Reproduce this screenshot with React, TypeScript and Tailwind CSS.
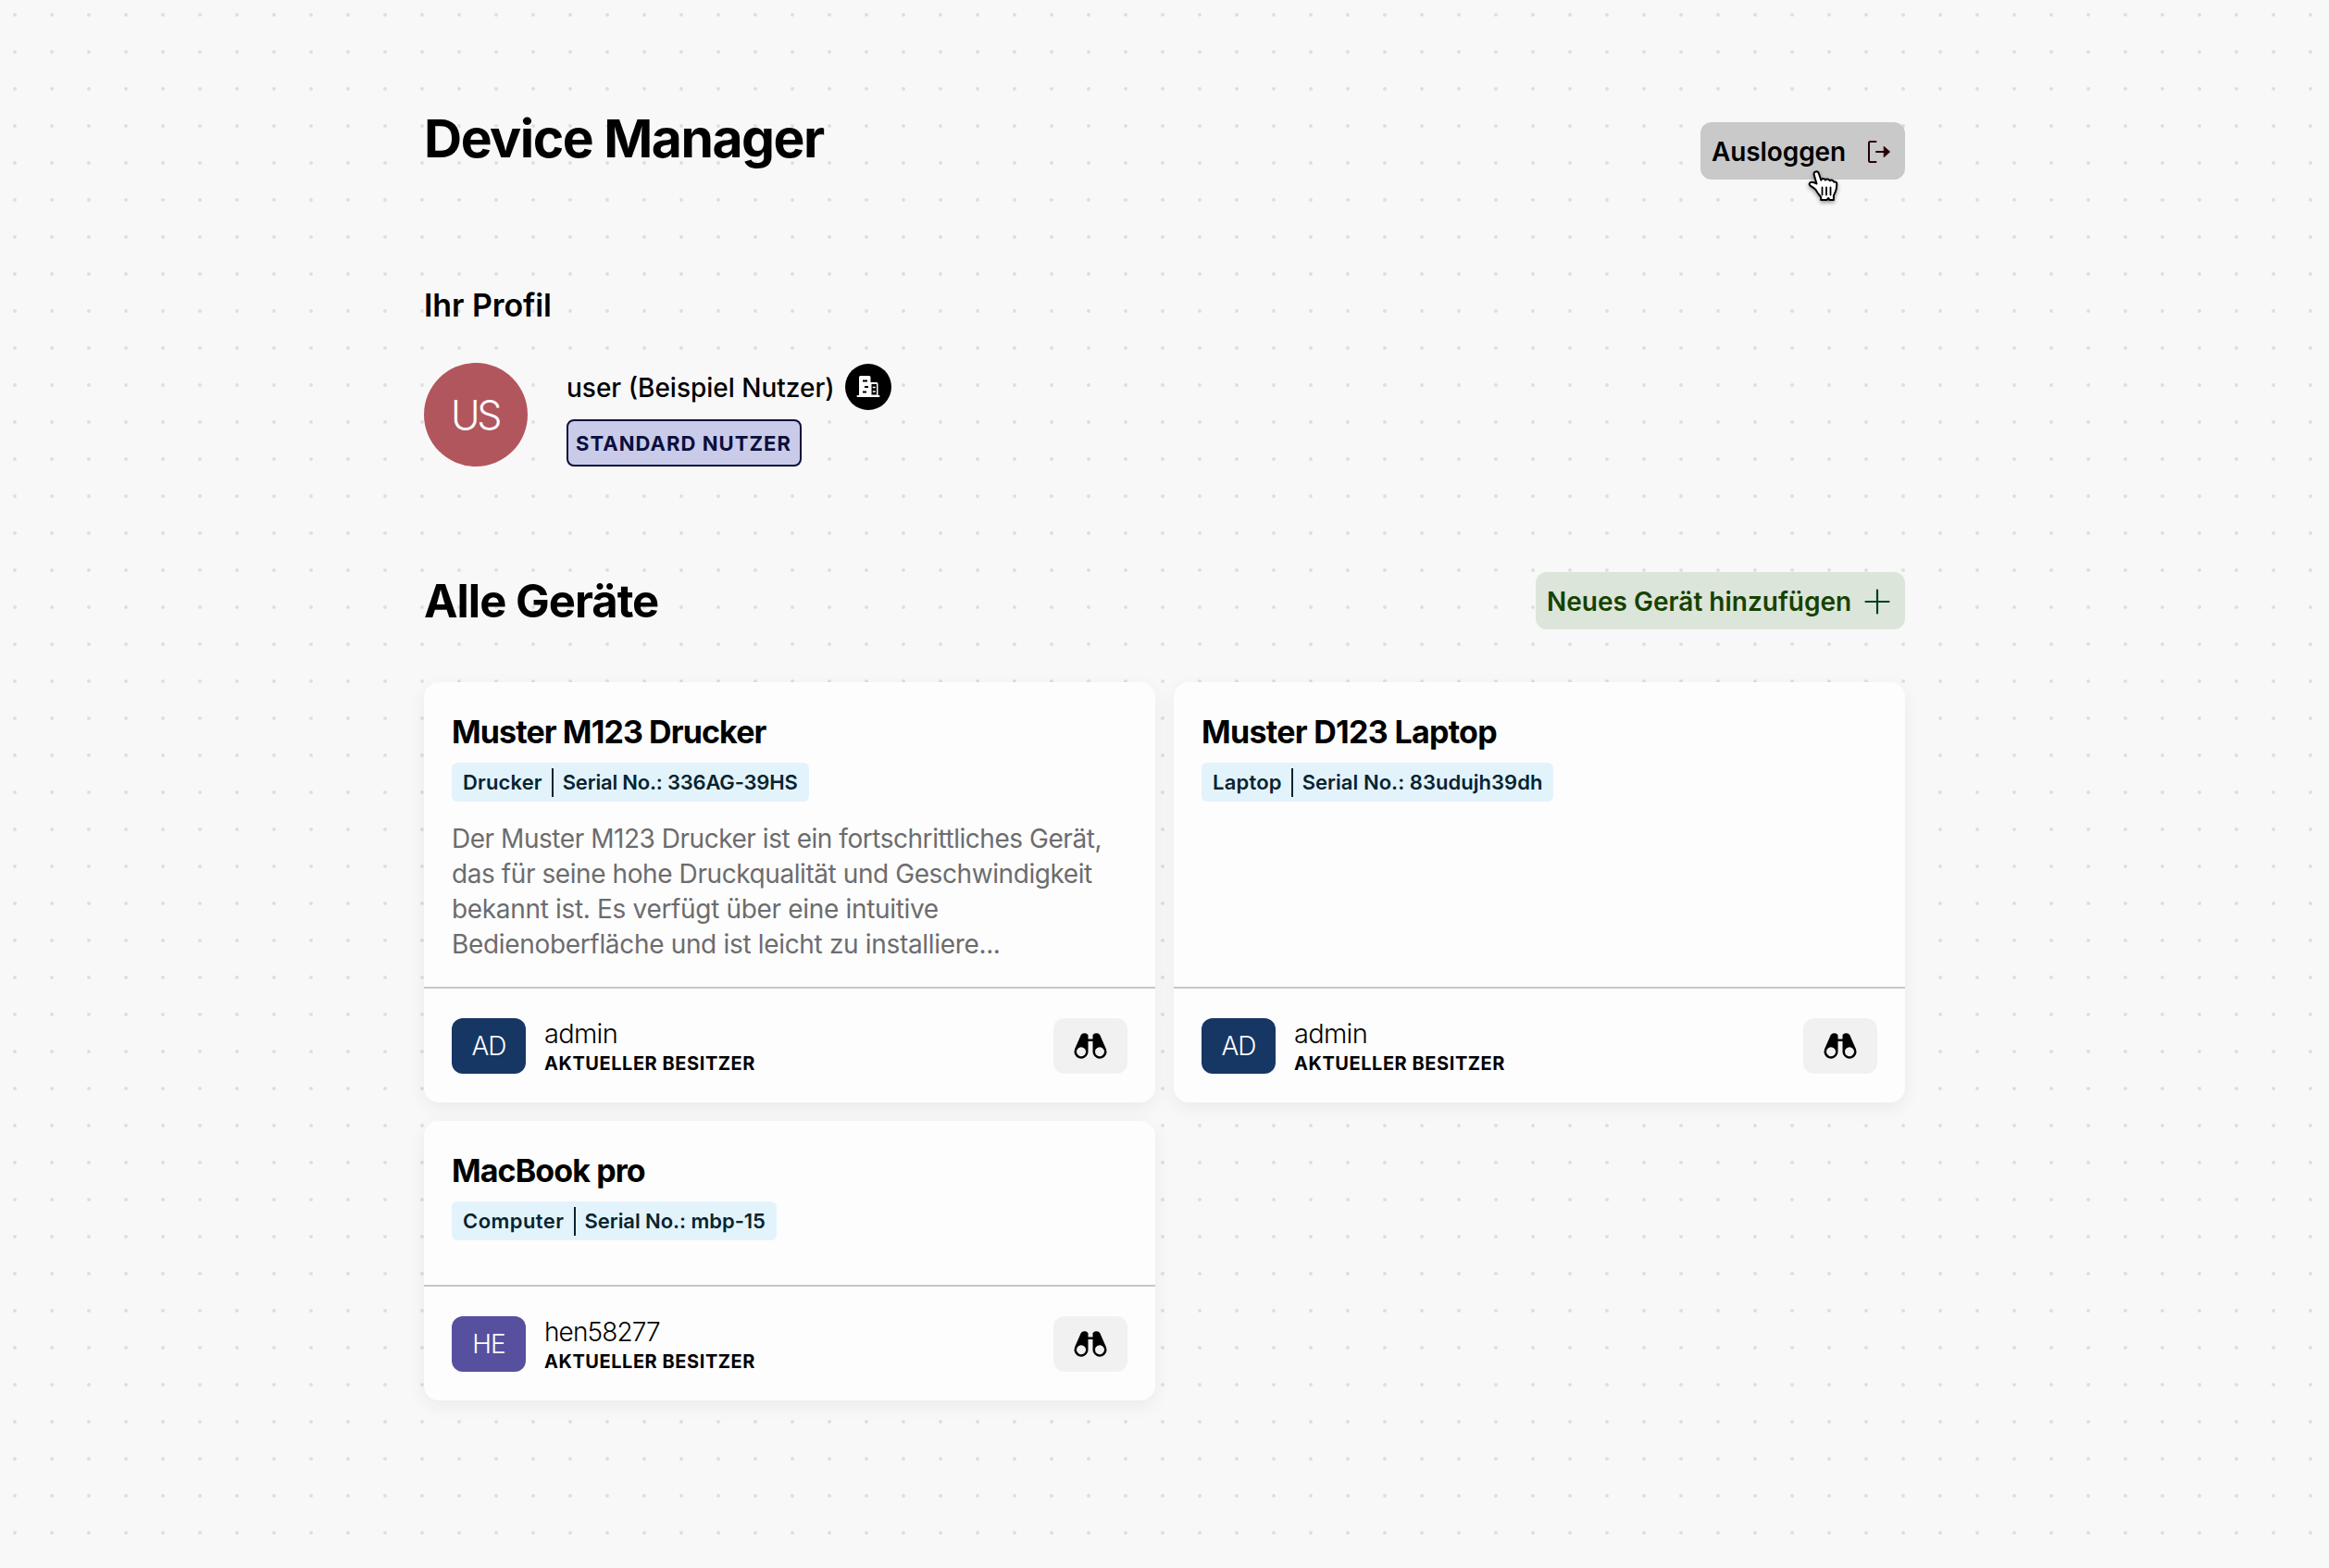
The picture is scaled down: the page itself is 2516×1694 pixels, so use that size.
import { PiBinocularsFill } from "react-icons/pi";
import clsx from "clsx";

type Device = {
  name: string;
  nameClass: string;
  kind: string;
  kindClass: string;
  serial: string;
  serialClass: string;
  description: { text: string; className: string }[];
  owner: string;
  ownerClass: string;
  initials: string;
  avatarClass: string;
  bodyClass: string;
};

const devices: Device[] = [
  {
    name: "Muster M123 Drucker",
    nameClass: "tracking-[-0.9px]",
    kind: "Drucker",
    kindClass: "tracking-[0.15px]",
    serial: "Serial No.: 336AG-39HS",
    serialClass: "tracking-[-0.2px]",
    description: [
      { text: "Der Muster M123 Drucker ist ein fortschrittliches Gerät,", className: "tracking-[-0.46px]" },
      { text: "das für seine hohe Druckqualität und Geschwindigkeit", className: "tracking-[-0.42px]" },
      { text: "bekannt ist. Es verfügt über eine intuitive", className: "tracking-[-0.33px]" },
      { text: "Bedienoberfläche und ist leicht zu installiere...", className: "tracking-[-0.33px]" },
    ],
    owner: "admin",
    ownerClass: "text-[29px] tracking-[-0.7px]",
    initials: "AD",
    avatarClass: "bg-[#163664]",
    bodyClass: "h-[329px]",
  },
  {
    name: "Muster D123 Laptop",
    nameClass: "tracking-[-0.7px]",
    kind: "Laptop",
    kindClass: "tracking-[0.2px]",
    serial: "Serial No.: 83udujh39dh",
    serialClass: "tracking-[0.04px]",
    description: [],
    owner: "admin",
    ownerClass: "text-[29px] tracking-[-0.7px]",
    initials: "AD",
    avatarClass: "bg-[#163664]",
    bodyClass: "h-[329px]",
  },
  {
    name: "MacBook pro",
    nameClass: "tracking-[-0.9px]",
    kind: "Computer",
    kindClass: "tracking-[0.45px]",
    serial: "Serial No.: mbp-15",
    serialClass: "tracking-[-0.05px]",
    description: [],
    owner: "hen58277",
    ownerClass: "text-[28px] tracking-[-0.9px]",
    initials: "HE",
    avatarClass: "bg-[#57509f]",
    bodyClass: "h-[177px]",
  },
];

function LogoutIcon() {
  return (
    <svg className="h-[26px] w-[26px]" viewBox="0 0 26 26" fill="none" stroke="#240006" strokeWidth="2" strokeLinecap="round" strokeLinejoin="round">
      <path d="M9.5 2H3.500a1.500 1.500 0 0 0-1.500 1.500v19A1.500 1.500 0 0 0 3.500 24h6" />
      <path d="M10 13h9" />
      <path d="M18.500 7.500 24.500 13l-6 5.500z" fill="#240006" strokeWidth="1" />
    </svg>
  );
}

function PlusIcon() {
  return (
    <svg className="h-7 w-7" viewBox="0 0 28 28" fill="none" stroke="#00401a" strokeWidth="2.2" strokeLinecap="round">
      <path d="M14 1.5v25M1.5 14h25" />
    </svg>
  );
}

function OfficeIcon() {
  return (
    <svg className="h-[26px] w-[26px]" viewBox="0 0 26 26" fill="none">
      <path d="M3 2.500a1.500 1.500 0 0 1 1.500-1.500h9.500a1.500 1.500 0 0 1 1.500 1.500V8h6.500a1.500 1.500 0 0 1 1.500 1.500V22h1a.8.8 0 0 1 0 2H1.500a.8.8 0 0 1 0-2H3z" fill="#fff" />
      <path d="M16.500 10h5.500v11.500h-5.500z" fill="#000" />
      <path d="M7 6.500h5M9 13h4M7 18.500h4" stroke="#000" strokeWidth="1.800" />
      <path d="M17.800 13.500h3M17.800 18h3" stroke="#fff" strokeWidth="1.600" />
    </svg>
  );
}

function HandCursor() {
  return (
    <svg className="absolute top-[52px] left-[116px] h-[36px] w-[34px] drop-shadow-[0_2px_2px_rgba(0,0,0,0.4)]" viewBox="0 0 34 36">
      <path
        d="M9.500 14.500 6.800 5.400C6.200 3 6.900 1.700 8.600 1.400c1.700-.3 2.900.7 3.500 2.600l2.200 6.600c.8-2 3.400-2.200 4.600-.1 1.300-1.600 3.800-1.300 4.800.7 1.500-1.200 3.900-.6 4.600 1.400 1.900-.7 3.100.4 3 2.600-.1 3-.3 5.400-1.600 8.200-.8 1.800-1.700 3-1.800 4.500V32h-4.400l-1.200-2-1.800 2h-6.300v-2.800c-1.700-2.400-3.800-4.700-5.300-7.600C7.600 19.400 5 18.200 2.600 16.600.9 15.200 1.600 12.900 3.900 12.700c2-.2 3.600.6 5.600 1.800z"
        fill="#fff"
        stroke="#000"
        strokeWidth="2"
        strokeLinejoin="round"
      />
      <path d="M15.500 18.500v8M20 18.500v8M24.500 18.500v8" stroke="#000" strokeWidth="1.800" strokeLinecap="round" />
    </svg>
  );
}

function DeviceCard({ device }: { device: Device }) {
  return (
    <article className="flex w-[790px] flex-col rounded-2xl bg-[#fdfdfd] shadow-[0_6px_20px_rgba(0,0,0,0.06)]">
      <div className={clsx("flex flex-col items-start px-[30px] pt-[34px]", device.bodyClass)}>
        <h3 className={clsx("text-[34px] leading-10 font-[650] text-black", device.nameClass)}>{device.name}</h3>
        <div className="mt-[13px] flex h-[42px] shrink-0 items-center rounded-md bg-[#e3f3fc] px-3 text-[22px] leading-[42px] font-semibold text-[#06242f]">
          <span className={device.kindClass}>{device.kind}</span>
          <span className="mx-[10px] h-[31px] w-0.5 bg-[#06242f]" />
          <span className={device.serialClass}>{device.serial}</span>
        </div>
        {device.description.length > 0 && (
          <p className="mt-[21px] text-[28px] leading-[38px] text-[#6c6c6e]">
            {device.description.map((line) => (
              <span key={line.text} className={clsx("block whitespace-nowrap", line.className)}>
                {line.text}
              </span>
            ))}
          </p>
        )}
      </div>
      <footer className="flex h-[125px] items-center border-t-2 border-[#c6c6cd] px-[30px]">
        <div className={clsx("flex h-[60px] w-20 items-center justify-center rounded-xl text-[28px] font-light tracking-[-1px] text-white", device.avatarClass)}>
          {device.initials}
        </div>
        <div className="ml-5 flex flex-col pt-[6px] text-black">
          <span className={clsx("leading-8 font-light", device.ownerClass)}>{device.owner}</span>
          <span className="text-[20px] leading-8 font-[650] tracking-[0.55px]">AKTUELLER BESITZER</span>
        </div>
        <button className="ml-auto flex h-[60px] w-20 items-center justify-center rounded-xl bg-[#f1f1f1]">
          <PiBinocularsFill className="h-10 w-10 text-black" />
        </button>
      </footer>
    </article>
  );
}

export default function App() {
  return (
    <div className="flex h-[1694px] w-[2516px] justify-center bg-[#f8f8f8] bg-[radial-gradient(circle_at_16px_16px,#dedee0_0,#dedee0_1.4px,transparent_2.4px)] bg-[length:40px_40px] font-['Inter',sans-serif]">
      <main className="flex w-[1600px] flex-col pt-px">
        <header className="flex h-[193px] items-end justify-between">
          <h1 className="mb-[10px] text-[57px] leading-[68px] font-[650] tracking-[-1.5px] text-black">Device Manager</h1>
          <button className="relative flex h-[62px] w-[221px] items-center justify-between rounded-xl bg-[#c9c9c9] pt-px pr-[15px] pl-3 text-[28px] font-semibold tracking-[-0.1px] text-black">
            <span>Ausloggen</span>
            <LogoutIcon />
            <HandCursor />
          </button>
        </header>

        <section className="mt-[114px]">
          <h2 className="text-[34px] leading-[44px] font-semibold tracking-[-0.1px] text-black">Ihr Profil</h2>
          <div className="mt-[40px] flex">
            <div className="flex h-28 w-28 items-center justify-center rounded-full bg-[#b2565e] pr-[2px] text-[43px] font-light tracking-[-3.5px] text-white">US</div>
            <div className="ml-[42px] flex flex-col items-start">
              <div className="flex items-center gap-[11px] pt-px">
                <span className="pt-0.5 text-[28px] leading-[48px] font-medium text-black">user (Beispiel Nutzer)</span>
                <span className="flex h-[50px] w-[50px] items-center justify-center rounded-full bg-black">
                  <OfficeIcon />
                </span>
              </div>
              <span className="mt-[10px] flex h-[51px] w-[254px] items-center rounded-lg border-2 border-[#0a0f3c] bg-[#c9cbe9] px-2 pt-0.5 text-[22px] font-[650] whitespace-nowrap tracking-[1.05px] text-[#0a0f3c]">
                STANDARD NUTZER
              </span>
            </div>
          </div>
        </section>

        <section className="mt-[114px]">
          <div className="flex h-[62px] items-center justify-between">
            <h2 className="pt-0.5 text-[49px] leading-[62px] font-[650] tracking-[-1px] text-black">Alle Geräte</h2>
            <button className="flex h-[62px] w-[399px] items-center justify-between rounded-xl bg-[#dce5d9] pt-px pr-4 pl-3 text-[28px] font-semibold text-[#154200]">
              <span>Neues Gerät hinzufügen</span>
              <PlusIcon />
            </button>
          </div>
          <div className="mt-[57px] grid grid-cols-[790px_790px] items-start gap-5">
            {devices.map((device) => (
              <DeviceCard key={device.name} device={device} />
            ))}
          </div>
        </section>
      </main>
    </div>
  );
}
